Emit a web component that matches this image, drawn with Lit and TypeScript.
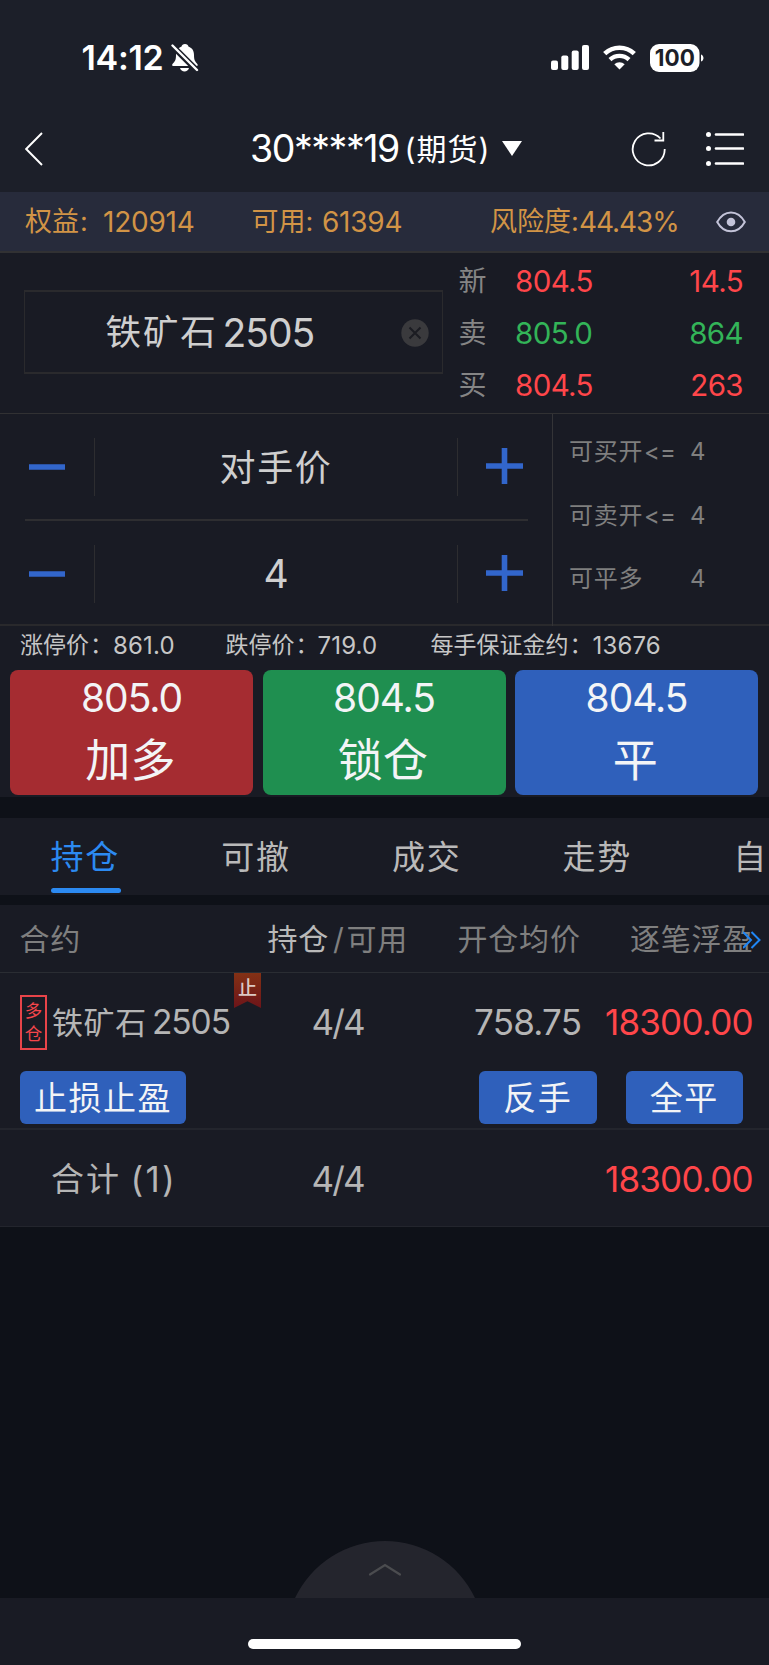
import { LitElement, html, svg, css } from "lit";
import { customElement, property, state } from "lit/decorators.js";
import { classMap } from "lit/directives/class-map.js";

@customElement("qty-stepper")
class QtyStepper extends LitElement {
  @property() value = "";
  static styles = css`
    :host { display: grid; grid-template-columns: 94px 1fr 94px; align-items: center; height: 105px; }
    .value { text-align: center; border: solid #2d2d30; border-width: 0 1px; height: 58px; line-height: 60px;
      color: #cfcfcf; font-size: 36px; letter-spacing: 1.6px; }
    .num { font-size: 39px; letter-spacing: 0; line-height: 58px; }
    svg { display: block; }
    .minus { margin: 0 0 0 29px; }
    .plus { margin: 0 0 2px 28px; }
  `;
  render() {
    return html`
      <svg class="minus" width="36" height="36"><path d="M0 18H36" stroke="#3266cb" stroke-width="5.600" /></svg>
      <div class=${classMap({ value: true, num: /^\d+$/.test(this.value) })}>${this.value}</div>
      <svg class="plus" width="37" height="36"><path d="M0 18H37M18.500 0V36" stroke="#3266cb" stroke-width="5.600" /></svg>
    `;
  }
}

@customElement("app-root")
class AppRoot extends LitElement {
  @state() tab = 0;

  static styles = css`
    :host { display: flex; flex-direction: column; width: 769px; height: 1665px; overflow: hidden; background: #0e1118;
      font-family: "Inter", "Noto Sans CJK SC", sans-serif; font-weight: 400; color: #b5b5b5; white-space: nowrap; }
    * { box-sizing: border-box; }
    svg { display: block; }
    .status { height: 107px; background: #1c1f29; display: grid; grid-template-columns: 81.5px 89px 380.5px 52px 47px 1fr;
      padding-top: 8px; align-items: center; color: #fff; }
    .time { font-size: 34px; font-weight: 600; letter-spacing: -.3px; }
    .nav { height: 85px; background: #1c1f29; display: grid; grid-template-columns: 25px 225px 154.500px 97.5px 129px 75px 1fr;
      align-items: center; color: #fff; line-height: 84px; padding-bottom: 1px; }
    .acct { font-size: 37.5px; letter-spacing: -1.45px; }
    .kind { font-size: 30px; letter-spacing: 1px; }
    .nav svg { margin-bottom: 1px; }
    .funds { height: 59px; background: #272b3b; color: #d29446; font-size: 27px; display: grid; line-height: 60px;
      grid-template-columns: 25px 78px 148.5px 70.500px 168px 89px 136.500px 1fr; align-items: center; }
    .funds .n { font-size: 28px; letter-spacing: -.25px; }
    .funds .pct { letter-spacing: -1.1px; }
    .funds svg { margin-bottom: 1px; }
    .colon { padding-left: 1px; }
    .quote { height: 163px; background: #191b24; border: solid #313133; border-width: 2px 0 1px; display: grid;
      grid-template-columns: 443px 1fr; align-items: center; }
    .pick { margin: 0 0 2px 24px; height: 84px; border: 2px solid #2a2a2d; border-left-width: 1px; border-right-width: 1px;
      display: grid; grid-template-columns: 80.5px 117px 178.500px 1fr; align-items: center; line-height: 81px; color: #cfcfcf; }
    .pick .cn { font-size: 35.5px; letter-spacing: 1.9px; }
    .pick .no { font-size: 39px; letter-spacing: -1px; }
    .ticks { display: grid; grid-template-rows: repeat(3, 52px); padding-bottom: 1px; }
    .tick { display: grid; grid-template-columns: 15.500px 56.500px 1fr auto; padding-right: 26px; line-height: 52px; font-size: 29.5px; letter-spacing: -.6px; }
    .tick .k { font-size: 28px; color: #858585; }
    .up { color: #ff464a; }
    .down { color: #33b458; }
    .order { height: 212px; background: #191b24; border-bottom: 2px solid #29292c; display: grid; grid-template-columns: 552px 1fr; }
    .rule { height: 2px; margin: 0 24px 0 25px; background: #2e2e31; }
    .limits { border-left: 1px solid #343437; padding-top: 6px; color: #7f7f7f; font-size: 24px; }
    .limit { display: grid; grid-template-columns: 16px 75px 46px 1fr; line-height: 63.5px; height: 63.5px; }
    .limit .w { letter-spacing: .8px; }
    .info { height: 44px; padding-bottom: 5px; background: #191b24; display: grid; line-height: 39px; font-size: 23px; color: #c6c6c6;
      grid-template-columns: 20px 93px 112.5px 92px 113px 162px 1fr; }
    .info .n { font-size: 24px; letter-spacing: .15px; }
    .acts { background: #191b24; height: 127px; padding: 0 11px 2px 10px; display: grid; grid-template-columns: repeat(3, 1fr); gap: 9.5px; margin-bottom: 21px; }
    .act { border-radius: 8px; color: #f3f4f6; text-align: center; padding-top: 4.5px; }
    .act .p { font-size: 39px; letter-spacing: -1.05px; line-height: 46px; }
    .act .l { font-size: 45px; line-height: 68px; margin-top: 6.500px; letter-spacing: .3px; padding-right: 2px; }
    .buy { background: #a52c31; }
    .lock { background: #1f8f50; }
    .close { background: #2f60bb; }
    .tabs { background: #191b24; height: 77px; display: grid; grid-template-columns: repeat(5, 170.700px); padding-left: 50.5px; overflow: hidden; margin-bottom: 10px; }
    .tab { font-size: 33px; letter-spacing: 1.8px; line-height: 78px; height: 75px; width: 70px; color: #b9b9b9;
      display: flex; flex-direction: column; }
    .on { color: #2c8af1; }
    .on::after { content: ""; height: 5px; flex: none; border-radius: 3px; background: #2c8af1; margin-top: -8px; }
    .tab:last-child { width: 35px; }
    .head { height: 68px; background: #191b24; border-bottom: 1px solid #2a2d33; display: grid; line-height: 69px; font-size: 30px; color: #7f7f7f;
      grid-template-columns: 19.500px 248px 65.500px 13.500px 111px 172.5px 113px 1fr; letter-spacing: .8px; align-items: center; }
    .bright { color: #b9b9b9; }
    .pos { height: 157px; background: #191b24; border-bottom: 2px solid #23252d; }
    .line { display: grid; grid-template-columns: 20px 32px 100px 82px 77.5px 162.500px 131px auto; height: 98px; line-height: 99px; }
    .side { width: 27px; height: 55px; margin-top: 22px; border: 2px solid #e84449; color: #f4464b; font-size: 17.5px; line-height: 22.5px;
      display: flex; flex-direction: column; align-items: center; padding-top: 3px; }
    .name { font-size: 31px; letter-spacing: .6px; }
    .code { font-size: 33.5px; letter-spacing: -1.1px; }
    .flag { width: 27px; height: 35px; background: linear-gradient(#833115, #6d1419); clip-path: polygon(0 0, 100% 0, 100% 100%, 50% 81%, 0 100%);
      color: #dcc9c4; font-size: 19px; line-height: 31px; text-align: center; font-weight: 500; }
    .n35 { font-size: 35px; letter-spacing: -.8px; }
    .frac { letter-spacing: -1.9px; }
    .ops { display: grid; grid-template-columns: 166px 1fr auto; padding: 0 26px 0 20px; }
    .op { background: #2f60bb; border-radius: 6px; height: 53px; line-height: 54px; font-size: 33px; letter-spacing: 1.5px; color: #f3f4f6; text-align: center; }
    .pair { display: grid; grid-template-columns: 117.5px 117.5px; gap: 29px; grid-column: 3; }
    .total { height: 97px; background: #191b24; border-bottom: 1px solid #23252d; display: grid; line-height: 98px;
      grid-template-columns: 51px 79.500px 181px 293.500px auto; }
    .total .cn { font-size: 33px; letter-spacing: 2px; }
    .total .cnt { letter-spacing: 2.2px; font-size: 35px; }
    .foot { margin-top: auto; display: flex; flex-direction: column; align-items: center; }
    .bar { width: 100%; height: 67px; background: #191b24; padding: 41px 0 0 247.500px; }
    .home { width: 273.500px; height: 10px; border-radius: 5px; background: #fff; }
  `;

  limit(a: string, b: string) {
    return html`<div class="limit"><span></span><span class="w">${a}</span><span>${b}</span><span>4</span></div>`;
  }

  tick(k: string, p: string, v: string, c: string) {
    return html`<div class="tick"><span></span><span class="k">${k}</span><span class=${c}>${p}</span><span class=${c}>${v}</span></div>`;
  }

  render() {
    const dots = [2.5, 16.5, 31.5].map((y) => svg`<circle cx="2.500" cy=${y} r="2.500" fill="#fff" /><path d=${`M10 ${y}H37`} stroke="#fff" stroke-width="2.600" stroke-linecap="round" />`);
    return html`
      <div class="status">
        <span></span><span class="time">14:12</span>
        <svg width="28" height="30" viewBox="0 0 28 30">
          <path d="M14 1C12 1 10.800 2.200 10.600 3.500 6.500 5 5 8 5 12 5 17 4 18.500 1.500 21 .8 22 1 23 2.300 23H25.500C27 23 27 22 26.300 21 24 18.500 23 17 23 12 23 8 21.500 5 17.400 3.500 17.200 2.200 16 1 14 1Z" fill="#fff" />
          <path d="M9 25H18C17.500 27 15.500 28.500 13.500 28.500S9.500 27 9 25Z" fill="#fff" />
          <path d="M1 2.500L26.500 28" stroke="#1c1f29" stroke-width="6" />
          <path d="M1.500 2.500L26 27" stroke="#fff" stroke-width="2.400" stroke-linecap="round" />
        </svg>
        <svg width="39" height="25" viewBox="0 0 39 25" fill="#fff">
          <rect x="0" y="15.500" width="7" height="9.500" rx="2" /><rect x="10.300" y="10.500" width="7" height="14.500" rx="2" />
          <rect x="20.700" y="5.500" width="7" height="19.500" rx="2" /><rect x="31" y="0" width="7" height="25" rx="2" />
        </svg>
        <svg width="33" height="25" viewBox="0 0 33 25" fill="none" stroke="#fff" stroke-width="4.600">
          <path d="M1.700 8.700A21.500 21.500 0 0 1 31.300 8.700" /><path d="M7 14.600A14 14 0 0 1 26 14.600" stroke-width="4.400" />
          <path d="M11.300 19.300A7.600 7.600 0 0 1 21.700 19.300L16.500 24.500Z" fill="#fff" stroke="none" />
        </svg>
        <svg width="54" height="28" viewBox="0 0 54 28">
          <rect width="49.500" height="28" rx="9" fill="#fff" /><path d="M51 10.500C54.300 11.500 54.300 16.500 51 17.500Z" fill="#fff" />
          <text x="24.800" y="22" text-anchor="middle" font-size="22.500" font-weight="700" letter-spacing="0" fill="#1c1f29">100</text>
        </svg>
      </div>

      <div class="nav">
        <span></span>
        <svg width="18" height="34" viewBox="0 0 18 34"><path d="M17 1L1.200 17 17 33" fill="none" stroke="#fff" stroke-width="1.900" /></svg>
        <span class="acct">30****19</span><span class="kind">(期货)</span>
        <svg width="20" height="15"><path d="M0 0H20L10 15Z" fill="#fff" /></svg>
        <svg width="36" height="36" viewBox="0 0 36 36" fill="none" stroke="#fff" stroke-width="1.800">
          <path d="M33.700 18A16 16 0 1 1 29.500 7.500" /><path d="M32.300 1V9.500H23.500" />
        </svg>
        <svg width="38" height="34">${dots}</svg>
      </div>

      <div class="funds">
        <span></span><span>权益<span class="colon">:</span></span><span class="n">120914</span><span>可用:</span><span class="n">61394</span>
        <span>风险度:</span><span class="n pct">44.43%</span>
        <svg width="30" height="22" viewBox="0 0 30 22" fill="none" stroke="#c3c3d8" stroke-width="2">
          <path d="M1.200 11C4.500 5 9.500 1.400 15 1.400S25.500 5 28.800 11C25.500 17 20.500 20.300 15 20.300S4.500 17 1.200 11Z" /><circle cx="15" cy="11" r="4.300" fill="#c3c3d8" stroke="none" />
        </svg>
      </div>

      <div class="quote">
        <div class="pick">
          <span></span><span class="cn">铁矿石</span>
          <span class="no">2505</span>
          <svg width="28" height="28" viewBox="0 0 28 28"><circle cx="14" cy="14" r="13.700" fill="#3a3a3d" /><path d="M8.500 8.500L19.500 19.500M19.500 8.500L8.500 19.500" stroke="#1b1c22" stroke-width="2" /></svg>
        </div>
        <div class="ticks">
          ${this.tick("新", "804.5", "14.5", "up")}${this.tick("卖", "805.0", "864", "down")}${this.tick("买", "804.5", "263", "up")}
        </div>
      </div>

      <div class="order">
        <div>
          <qty-stepper value="对手价"></qty-stepper>
          <div class="rule"></div>
          <qty-stepper value="4"></qty-stepper>
        </div>
        <div class="limits">${this.limit("可买开", "<=")}${this.limit("可卖开", "<=")}${this.limit("可平多", "")}</div>
      </div>

      <div class="info">
        <span></span><span>涨停价<span class="colon">：</span></span><span class="n">861.0</span><span>跌停价<span class="colon">：</span></span><span class="n">719.0</span>
        <span>每手保证金约<span class="colon">：</span></span><span class="n">13676</span>
      </div>

      <div class="acts">
        <div class="act buy"><div class="p">805.0</div><div class="l">加多</div></div>
        <div class="act lock"><div class="p">804.5</div><div class="l">锁仓</div></div>
        <div class="act close"><div class="p">804.5</div><div class="l">平</div></div>
      </div>

      <div class="tabs">
        ${["持仓", "可撤", "成交", "走势", "自"].map((t, i) => html`<div class=${classMap({ tab: true, on: i === this.tab })} @click=${() => (this.tab = i)}>${t}</div>`)}
      </div>

      <div class="head">
        <span></span><span>合约</span><span class="bright">持仓</span><span>/</span><span>可用</span><span>开仓均价</span><span>逐笔浮盈</span>
        <svg width="18" height="18" viewBox="0 0 18 18" fill="none" stroke="#1f86f5" stroke-width="2"><path d="M0 1L8 9 0 17M8.500 1L16.500 9 8.500 17" /></svg>
      </div>

      <div class="pos">
        <div class="line">
          <span></span>
          <div class="side"><span>多</span><span>仓</span></div>
          <span class="name">铁矿石</span><span class="code">2505</span>
          <div class="flag">止</div>
          <span class="n35 frac">4/4</span><span class="n35">758.75</span><span class="n35 up">18300.00</span>
        </div>
        <div class="ops">
          <div class="op">止损止盈</div>
          <div class="pair"><div class="op">反手</div><div class="op">全平</div></div>
        </div>
      </div>

      <div class="total">
        <span></span><span class="cn">合计</span><span class="cnt">(1)</span><span class="n35 frac">4/4</span><span class="n35 up">18300.00</span>
      </div>

      <div class="foot">
        <svg width="180" height="57" viewBox="0 0 180 57">
          <path d="M0 57A99.600 99.600 0 0 1 180 57Z" fill="#24252d" />
          <path d="M75 33.500L90 24 105 33.500" fill="none" stroke="#4b4c4f" stroke-width="2.200" stroke-linecap="round" />
        </svg>
        <div class="bar"><div class="home"></div></div>
      </div>
    `;
  }
}
